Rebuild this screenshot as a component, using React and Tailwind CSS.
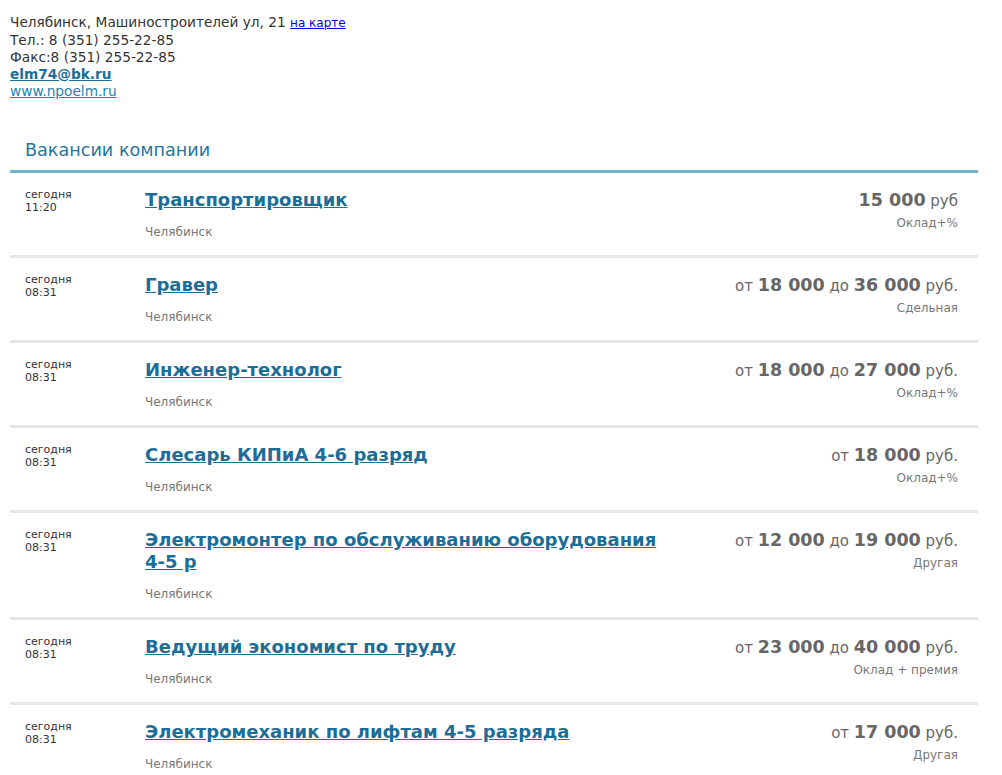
import React from 'react'

const vacancies = [
  { date: 'сегодня', time: '11:20', title: 'Транспортировщик', from: null, to: null, exact: '15 000', unit: 'руб', kind: 'Оклад+%' },
  { date: 'сегодня', time: '08:31', title: 'Гравер', from: '18 000', to: '36 000', unit: 'руб.', kind: 'Сдельная' },
  { date: 'сегодня', time: '08:31', title: 'Инженер-технолог', from: '18 000', to: '27 000', unit: 'руб.', kind: 'Оклад+%' },
  { date: 'сегодня', time: '08:31', title: 'Слесарь КИПиА 4-6 разряд', from: '18 000', to: null, unit: 'руб.', kind: 'Оклад+%' },
  { date: 'сегодня', time: '08:31', title: 'Электромонтер по обслуживанию оборудования 4-5 р', from: '12 000', to: '19 000', unit: 'руб.', kind: 'Другая' },
  { date: 'сегодня', time: '08:31', title: 'Ведущий экономист по труду', from: '23 000', to: '40 000', unit: 'руб.', kind: 'Оклад + премия' },
  { date: 'сегодня', time: '08:31', title: 'Электромеханик по лифтам 4-5 разряда', from: '17 000', to: null, unit: 'руб.', kind: 'Другая' },
]

function Salary({ v }){
  return (
    <div className="text-[15px] leading-[22px] text-[#666]">
      {v.exact ? (
        <><b className="text-[17.5px]">{v.exact}</b> {v.unit}</>
      ) : (
        <>
          от <b className="text-[17.5px]">{v.from}</b>
          {v.to && <> до <b className="text-[17.5px]">{v.to}</b></>} {v.unit}
        </>
      )}
    </div>
  )
}

function VacancyRow({ v }){
  return (
    <div className="flex border-b-[3px] border-[#e6e6e6] pt-[15px] pb-[15px]">
      <div className="w-[135px] shrink-0 pl-[15px] text-[11px] leading-[13px] text-[#333]">
        <div>{v.date}</div>
        <div>{v.time}</div>
      </div>
      <div className="w-[525px] shrink-0 pt-[1px]">
        <div className="text-[18px] leading-[22px]">
          <a href="#" className="font-bold text-[#1b6e97] underline">{v.title}</a>
        </div>
        <div className="mt-[13px] text-[12px] leading-[16px] text-[#777]">Челябинск</div>
      </div>
      <div className="flex-1 pt-[1px] pr-[20px] text-right">
        <Salary v={v} />
        <div className="text-[12px] leading-[22px] text-[#777]">{v.kind}</div>
      </div>
    </div>
  )
}

export default function App(){
  return (
    <div className="min-h-screen bg-white px-[10px] pt-[14px] font-['DejaVu_Sans',Verdana,sans-serif] text-[#333]" style={{ width: 988 }}>
      <div className="text-[13.7px] leading-[17px]">
        <div>
          Челябинск, Машиностроителей ул, 21{' '}
          <a href="#" className="text-[12px] text-[#0000ee] underline">на карте</a>
        </div>
        <div>Тел.: 8 (351) 255-22-85</div>
        <div>Факс:8 (351) 255-22-85</div>
        <div><a href="#" className="font-bold text-[#1b6e97] underline">elm74@bk.ru</a></div>
        <div><a href="#" className="text-[#1b84b0] underline">www.npoelm.ru</a></div>
      </div>

      <div className="mt-[39px] border-b-[3px] border-[#6cb5cb] pb-[9px] pl-[15px] text-[17.6px] leading-[22px] text-[#1f76a3]">
        Вакансии компании
      </div>

      <div>
        {vacancies.map((v, i) => <VacancyRow key={i} v={v} />)}
      </div>
    </div>
  )
}
